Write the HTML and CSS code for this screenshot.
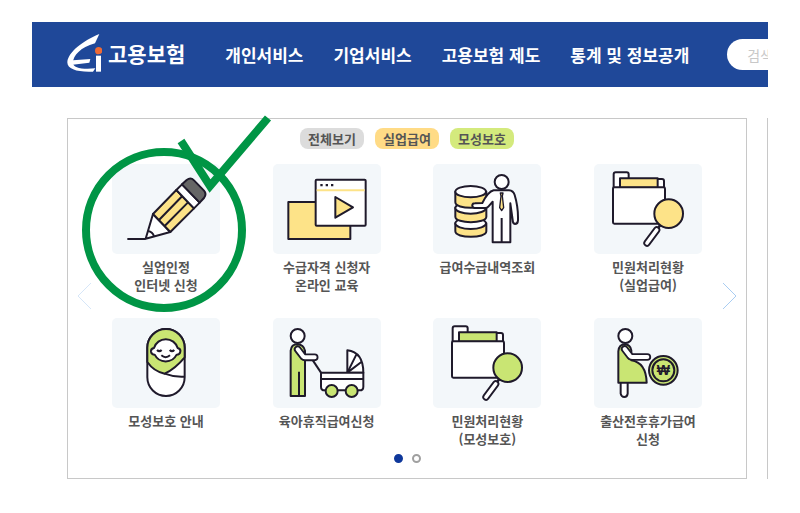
FILE: index.html
```html
<!DOCTYPE html>
<html lang="ko">
<head>
    <meta charset="UTF-8">
    <meta name="viewport" content="width=device-width, initial-scale=1.0">
    <title>고용보험</title>
    <link rel="stylesheet" href="styles.css">
</head>
<body>

    <!-- 민원처리현황 아이콘 (두 번 사용) -->
    <svg class="symbols" aria-hidden="true">
        <symbol id="icon-folder" viewBox="0 0 324 270">
            <path class="line" d="M59 72V31q0-6 6-6h33q6 0 6 6v14h100q6 0 6 6v21z"/>
            <path class="line accent" d="M78 43h113v28H78z"/>
            <rect class="line" x="57" y="70" width="156" height="109" rx="4"/>
            <path class="limb" d="M204 176l-10 14" stroke-width="8"/>
            <path class="limb" d="M188 198l-29 39" stroke-width="22"/>
            <path class="limb-fill" d="M188 198l-29 39" stroke-width="11"/>
            <circle class="line accent" cx="224" cy="149" r="43"/>
        </symbol>
    </svg>

    <div class="page">
        <header class="header">
            <a class="logo" href="#">
                <svg viewBox="0 0 105 114" width="35" height="38" aria-hidden="true">
                    <path fill="#fff" d="M97 0C48 20 4 54 1 84c-1 22 30 31 77 29l7-10c-41 3-67-1-67-17 0-20 22-46 66-58z"/>
                    <path fill="#fff" d="M18 79l52-4-3 11-50 6z"/>
                    <path fill="#fff" d="M87 65h15v48H87z"/>
                    <circle fill="#ee6a35" cx="95" cy="50" r="11"/>
                </svg>
                <span>고용보험</span>
            </a>
            <nav class="nav">
                <a href="#">개인서비스</a>
                <a href="#">기업서비스</a>
                <a href="#">고용보험 제도</a>
                <a href="#">통계 및 정보공개</a>
            </nav>
            <input class="search" type="text" placeholder="검색" aria-label="검색">
        </header>

        <main class="main">
            <section class="panel">
                <div class="filters">
                    <button class="filter all">전체보기</button>
                    <button class="filter benefit">실업급여</button>
                    <button class="filter maternity">모성보호</button>
                </div>

                <div class="slider">
                    <button class="arrow prev" aria-label="이전">
                        <svg viewBox="0 0 15 28" width="15" height="28"><path d="M14 1L1 14l13 13"/></svg>
                    </button>

                    <ul class="services">
                        <li class="checked">
                            <a href="#">
                                <svg class="icon benefit-icon" viewBox="0 0 324 270">
                                    <path class="line" d="M46 225h55"/>
                                    <path class="line" d="M123 150l52 54-74 20z"/>
                                    <path class="line" d="M108 201q14 2 18 16"/>
                                    <path class="line accent" d="M193 78l53 55-71 71-52-54z"/>
                                    <path class="line none" d="M211 96l-70 72M228 115l-70 71"/>
                                    <path class="line" d="M210 61l53 55-17 17-53-55z"/>
                                    <path class="line dark" d="M210 61l14-13q12-9 22 1l30 31q9 10 0 22l-13 14z"/>
                                </svg>
                                <span>실업인정<br>인터넷 신청</span>
                            </a>
                            <svg class="mark" viewBox="0 0 192 200" width="192" height="200" aria-hidden="true">
                                <circle cx="83" cy="116" r="78"/>
                                <path d="M100 27l29 45 58-68"/>
                            </svg>
                        </li>
                        <li>
                            <a href="#">
                                <svg class="icon benefit-icon" viewBox="0 0 324 270">
                                    <path class="line accent" d="M46 114h186v111H46z"/>
                                    <rect class="line" x="128" y="47" width="150" height="138" rx="3"/>
                                    <path stroke="currentColor" stroke-width="6" d="M131 79h144"/>
                                    <path fill="#1f1a2b" d="M142 60h7v7h-7zM158 60h7v7h-7zM174 60h7v7h-7z"/>
                                    <path class="line accent" d="M187 99l53 31-53 31z"/>
                                </svg>
                                <span>수급자격 신청자<br>온라인 교육</span>
                            </a>
                        </li>
                        <li>
                            <a href="#">
                                <svg class="icon benefit-icon" viewBox="0 0 324 270">
                                    <path class="line accent" d="M67 178v24c0 22 93 22 93 0v-24z"/>
                                    <ellipse class="line" cx="113" cy="178" rx="46" ry="17"/>
                                    <path class="line accent" d="M67 131v27c0 22 93 22 93 0v-27z"/>
                                    <ellipse class="line" cx="113" cy="132" rx="46" ry="17"/>
                                    <path class="line accent" d="M67 83v32c0 22 93 22 93 0V83z"/>
                                    <ellipse class="line" cx="113" cy="83" rx="46" ry="17"/>
                                    <path class="line" d="M182 79h46q13 1 17 14 11 36 10 76-1 11-9 11-7-1-7-12l-7-50v117h-53V113l-13 15q-4 5-12 4h-30q-7-2-6-9 1-5 8-5l22-1q17-34 34-38z"/>
                                    <path class="line none" d="M206 162v72"/>
                                    <path class="line thin accent" d="M202 87h8l-2 9 4 35-6 9-6-9 4-35z"/>
                                    <circle class="line" cx="206" cy="54" r="21"/>
                                </svg>
                                <span>급여수급내역조회</span>
                            </a>
                        </li>
                        <li>
                            <a href="#">
                                <svg class="icon benefit-icon" viewBox="0 0 324 270"><use href="#icon-folder"/></svg>
                                <span>민원처리현황<br>(실업급여)</span>
                            </a>
                        </li>
                        <li>
                            <a href="#">
                                <svg class="icon maternity-icon" viewBox="0 0 324 270">
                                    <rect class="line" x="106" y="33" width="112" height="201" rx="56"/>
                                    <path class="line accent" d="M106 132V89a56 56 0 0 1 112 0v29q-28 34-60 49-33-7-52-35z"/>
                                    <path class="line none" d="M158 167q28 11 60 9"/>
                                    <path class="line" d="M126 90a37 37 0 0 1 71 0q10 3 8 11-2 9-11 9a37 37 0 0 1-66 0q-9 0-11-9-1-9 9-11z"/>
                                    <path class="line none" d="M135 96q7 7 14 0M173 96q7 7 14 0M148 112q13 11 26 0"/>
                                </svg>
                                <span>모성보호 안내</span>
                            </a>
                        </li>
                        <li>
                            <a href="#">
                                <svg class="icon maternity-icon" viewBox="0 0 324 270">
                                    <path class="line accent" d="M53 234V98q2-19 20-19 19 1 23 19v136z"/>
                                    <path class="line none" d="M78 161v73"/>
                                    <path class="line none" d="M118 125l26 39"/>
                                    <path class="limb" d="M74 94l17 22q2 2 5 2h29" stroke-width="23"/>
                                    <path class="limb-fill" d="M74 94l17 22q2 2 5 2h29" stroke-width="12"/>
                                    <circle class="line" cx="74" cy="54" r="21"/>
                                    <path class="line" d="M223 164V97q48 6 48 67z"/>
                                    <path class="line none" d="M223 164l27-54M223 164l42-32"/>
                                    <path class="line" d="M144 164h127v42q0 11-11 11H155q-11 0-11-11z"/>
                                    <path class="line none" d="M144 183h127"/>
                                    <circle class="line accent" cx="176" cy="219" r="18"/>
                                    <circle class="line accent" cx="236" cy="219" r="18"/>
                                </svg>
                                <span>육아휴직급여신청</span>
                            </a>
                        </li>
                        <li>
                            <a href="#">
                                <svg class="icon maternity-icon" viewBox="0 0 324 270"><use href="#icon-folder"/></svg>
                                <span>민원처리현황<br>(모성보호)</span>
                            </a>
                        </li>
                        <li>
                            <a href="#">
                                <svg class="icon maternity-icon" viewBox="0 0 324 270">
                                    <path class="line" d="M80 192h21v35q-1 10-10 10t-11-10z"/>
                                    <path class="line accent" d="M73 194V100q2-21 20-21 16 1 19 18v30q44 7 46 67z"/>
                                    <path class="limb" d="M92 93l16 21q2 3 6 3h46" stroke-width="23"/>
                                    <path class="limb-fill" d="M92 93l16 21q2 3 6 3h46" stroke-width="12"/>
                                    <circle class="line" cx="94" cy="54" r="21"/>
                                    <circle class="line accent" cx="208" cy="157" r="43"/>
                                    <circle class="line accent" cx="208" cy="157" r="33"/>
                                    <text class="won" x="208" y="172">₩</text>
                                </svg>
                                <span>출산전후휴가급여<br>신청</span>
                            </a>
                        </li>
                    </ul>

                    <button class="arrow next" aria-label="다음">
                        <svg viewBox="0 0 15 28" width="15" height="28"><path d="M1 1l13 13L1 27"/></svg>
                    </button>
                </div>

                <div class="dots">
                    <button class="dot active" aria-label="1페이지"></button>
                    <button class="dot" aria-label="2페이지"></button>
                </div>
            </section>

            <section class="panel side"></section>
        </main>
    </div>

</body>
</html>
```

FILE: styles.css
```css
* { box-sizing: border-box; }
body { margin: 0; background-color: #fff; color: #555; font-family: "Noto Sans CJK KR", sans-serif; }
a { color: inherit; text-decoration: none; }
button { padding: 0; border: none; background: none; color: inherit; font-family: inherit; cursor: pointer; }

.symbols { position: absolute; width: 0; height: 0; }
.page { margin: 22px 32px; overflow: hidden; }

/* 상단 메뉴 */
.header { display: flex; align-items: center; height: 65px; padding-left: 35px; background-color: #1f4899; color: #fff; white-space: nowrap; overflow: hidden; }
.logo { display: flex; align-items: center; gap: 6px; font-size: 21px; font-weight: bold; }
.logo svg { flex: none; margin-bottom: 4px; }
.logo span { margin-bottom: 4px; }
.nav { display: flex; gap: 30px; margin-left: 40px; font-size: 17px; font-weight: bold; }
.search { flex: none; width: 200px; height: 31px; margin-left: 38px; padding: 0 20px; border: none; border-radius: 16px; background-color: #fff; font-family: inherit; font-size: 14px; }
.search::placeholder { color: #c8c8c8; }

/* 서비스 패널 */
.main { display: flex; gap: 20px; margin-top: 31px; padding-left: 35px; }
.panel { flex: 1; padding: 9px 0 15px; border: 1px solid #c8c8c8; }
.side { flex: 0 0 300px; margin-right: -299px; }

.filters { display: flex; justify-content: center; gap: 11px; }
.filter { width: 64px; height: 21px; border-radius: 8px; font-size: 13px; font-weight: bold; line-height: 18px; }
.all { background-color: #dcdcdc; }
.benefit { background-color: #ffdb86; }
.maternity { background-color: #d4ea7d; }

.slider { display: flex; margin-top: 15px; }
.arrow { display: flex; flex: 0 0 44px; align-self: center; margin-bottom: 20px; padding: 0 9px; }
.arrow path { fill: none; stroke: #a9cdf2; stroke-width: 1; }
.prev path { stroke: #d6e6f8; }
.next { justify-content: flex-end; }

.services { display: grid; flex: 1; grid-template-columns: repeat(4, 108px); justify-content: space-between; row-gap: 24px; margin: 0; padding: 0; list-style: none; }
.services a { display: block; font-size: 13px; font-weight: bold; line-height: 18px; text-align: center; }
.services span { display: block; min-height: 36px; margin-top: 4px; white-space: nowrap; }

.icon { display: block; width: 108px; height: 90px; border-radius: 5px; background-color: #f3f7fa; }
.benefit-icon { color: #fde388; }
.maternity-icon { color: #c9e573; }
.line { fill: #fff; stroke: #1f1a2b; stroke-width: 6; stroke-linejoin: round; }
.thin { stroke-width: 4; }
.accent { fill: currentColor; }
.dark { fill: #666; }
.none { fill: none; }
.limb { fill: none; stroke: #1f1a2b; stroke-linecap: round; }
.limb-fill { fill: none; stroke: #fff; stroke-linecap: round; }
.won { fill: #1f1a2b; font-family: "Liberation Sans", sans-serif; font-size: 42px; font-weight: bold; text-anchor: middle; }

/* 초록색 체크 표시 */
.checked { position: relative; }
.mark { position: absolute; top: -50px; left: -31px; z-index: 1; fill: none; stroke: #009545; stroke-width: 8; pointer-events: none; }

.dots { display: flex; justify-content: center; gap: 9px; margin-top: 6px; }
.dot { width: 9px; height: 9px; border: 2px solid #a0a0a0; border-radius: 50%; }
.active { border-color: #0f389b; background-color: #0f389b; }
```
